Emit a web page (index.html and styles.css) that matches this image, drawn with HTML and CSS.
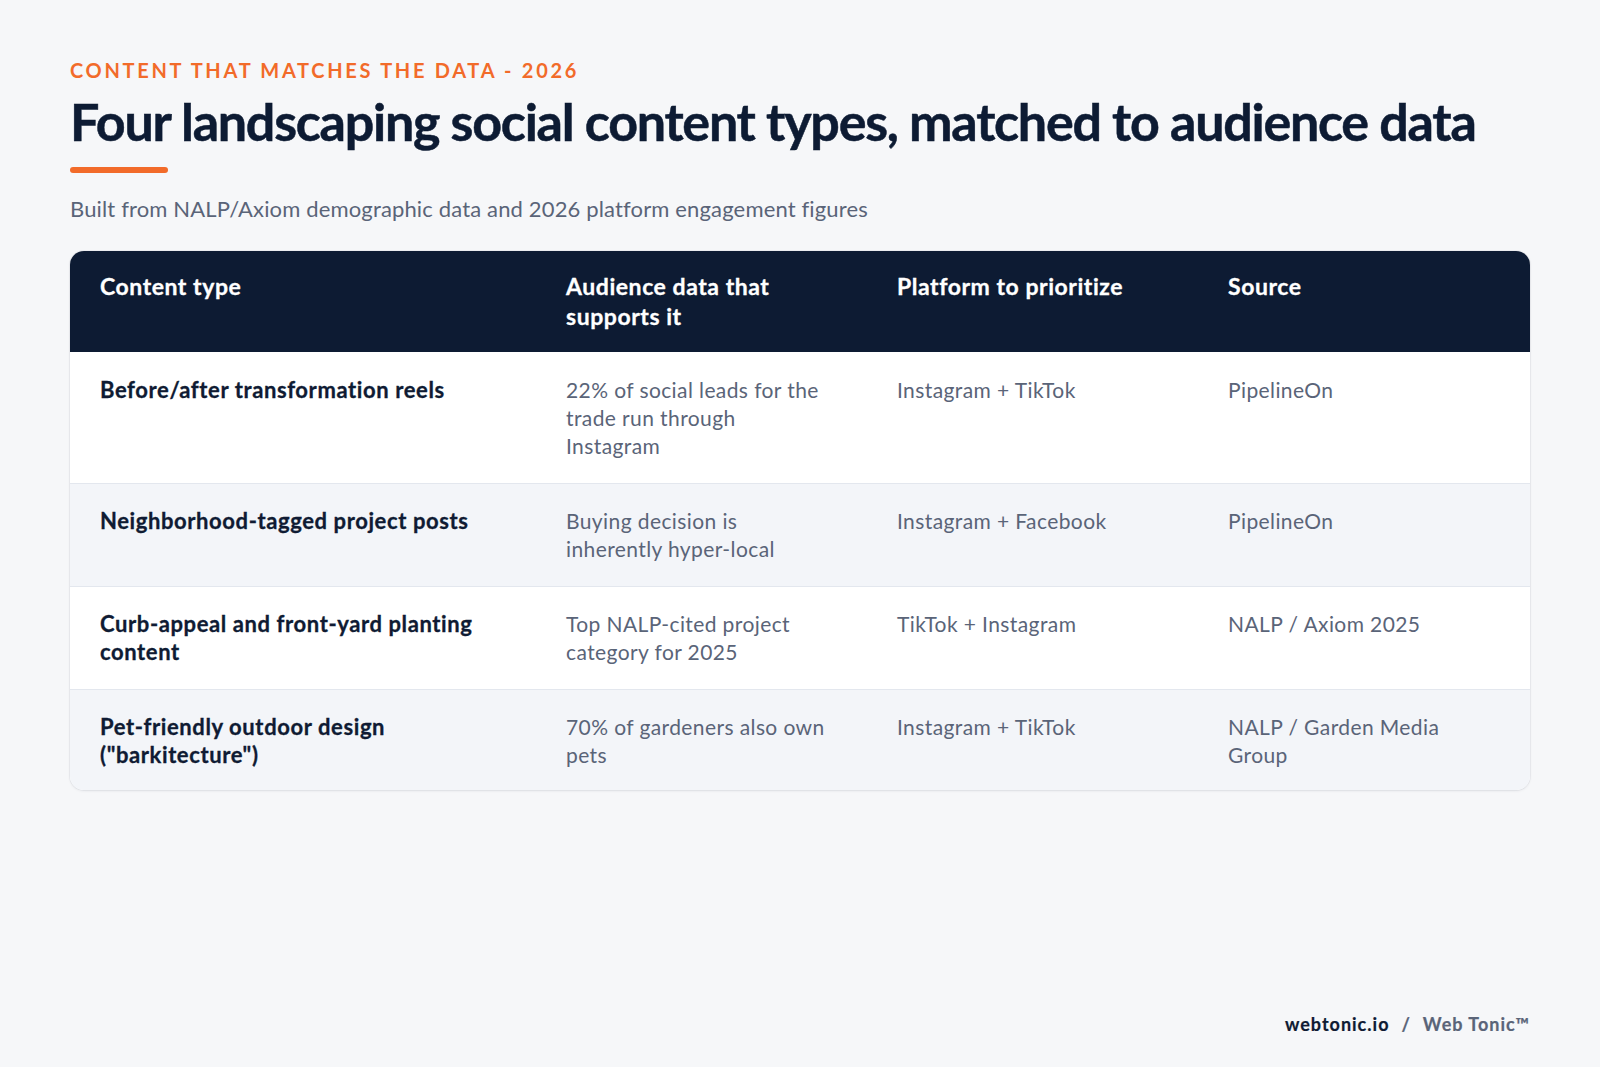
FILE: index.html
```html
<!DOCTYPE html>
<html lang="en">
<head>
<meta charset="utf-8">
<title>Four landscaping social content types</title>
<link rel="stylesheet" href="styles.css">
</head>
<body>
<main class="page">
  <header class="intro">
    <div class="eyebrow">CONTENT THAT MATCHES THE DATA - 2026</div>
    <h1 class="title">Four landscaping social content types, matched to audience data</h1>
    <div class="accent"></div>
    <p class="subtitle">Built from NALP/Axiom demographic data and 2026 platform engagement figures</p>
  </header>
  <div class="card">
    <table class="data">
      <colgroup>
        <col class="c1"><col class="c2"><col class="c3"><col class="c4">
      </colgroup>
      <thead>
        <tr>
          <th>Content type</th>
          <th>Audience data that supports it</th>
          <th>Platform to prioritize</th>
          <th>Source</th>
        </tr>
      </thead>
      <tbody>
        <tr>
          <td class="strong">Before/after transformation reels</td>
          <td>22% of social leads for the trade run through Instagram</td>
          <td>Instagram + TikTok</td>
          <td>PipelineOn</td>
        </tr>
        <tr>
          <td class="strong">Neighborhood-tagged project posts</td>
          <td>Buying decision is inherently hyper-local</td>
          <td>Instagram + Facebook</td>
          <td>PipelineOn</td>
        </tr>
        <tr>
          <td class="strong">Curb-appeal and front-yard planting content</td>
          <td>Top NALP-cited project category for 2025</td>
          <td>TikTok + Instagram</td>
          <td>NALP / Axiom 2025</td>
        </tr>
        <tr>
          <td class="strong">Pet-friendly outdoor design ("barkitecture")</td>
          <td>70% of gardeners also own pets</td>
          <td>Instagram + TikTok</td>
          <td>NALP / Garden Media Group</td>
        </tr>
      </tbody>
    </table>
  </div>
  <footer class="footer">
    <span class="brand">webtonic.io</span><span class="sep">/</span><span class="owner">Web Tonic™</span>
  </footer>
</main>
</body>
</html>
```

FILE: styles.css
```css
* { box-sizing: border-box; }
html, body { margin: 0; padding: 0; }
body {
  background: #f6f7f9;
  font-family: Lato, "Open Sans", sans-serif;
  color: #0f1b33;
}
.page {
  width: 1600px;
  height: 1067px;
  padding: 58px 70px 0 70px;
  display: flex;
  flex-direction: column;
}
.eyebrow {
  color: #f26b2a;
  font-size: 20px;
  font-weight: 700;
  letter-spacing: 2.7px;
  line-height: 24px;
}
.title {
  margin: 9px 0 0 0;
  font-size: 52px;
  line-height: 60px;
  font-weight: 700;
  letter-spacing: -1.25px;
  color: #0d1b33;
  -webkit-text-stroke: 0.5px #0d1b33;
}
.accent {
  width: 98px;
  height: 6px;
  border-radius: 3px;
  background: #f26b2a;
  margin-top: 16px;
}
.subtitle {
  margin: 21px 0 0 0;
  font-size: 22px;
  line-height: 30px;
  letter-spacing: 0.15px;
  color: #5a6478;
}
.card {
  margin-top: 27px;
  background: #ffffff;
  border-radius: 14px;
  overflow: hidden;
  box-shadow: 0 1px 3px rgba(15, 27, 51, 0.08), 0 0 0 1px rgba(15, 27, 51, 0.04);
}
.data {
  width: 100%;
  border-collapse: collapse;
  table-layout: fixed;
}
.c1 { width: 466px; }
.c2 { width: 331px; }
.c3 { width: 331px; }
.data th {
  background: #0d1b33;
  color: #ffffff;
  text-align: left;
  vertical-align: top;
  font-size: 23px;
  font-weight: 700;
  letter-spacing: 0.55px;
  line-height: 29.5px;
  padding: 21px 34px 21px 30px;
  height: 101px;
  -webkit-text-stroke: 0.3px #ffffff;
}
.data td {
  vertical-align: top;
  text-align: left;
  font-size: 21px;
  line-height: 28px;
  letter-spacing: 0.4px;
  color: #5a6478;
  padding: 23px 34px 23px 30px;
}
.data tbody tr:first-child td { padding-top: 24px; }
.data tbody tr:last-child td { padding-bottom: 21px; }
.data td.strong {
  color: #0f1b33;
  font-size: 22px;
  font-weight: 700;
  letter-spacing: 0.6px;
  -webkit-text-stroke: 0.3px #0f1b33;
}
.data tbody tr { border-top: 1px solid #e3e7ee; }
.data tbody tr:first-child { border-top: none; }
.data tbody tr:nth-child(even) td { background: #f3f5f9; }
.footer {
  margin-top: auto;
  margin-bottom: 32px;
  align-self: flex-end;
  font-size: 18px;
  font-weight: 700;
  letter-spacing: 1px;
  line-height: 22px;
  -webkit-text-stroke: 0.2px currentColor;
}
.brand { color: #0f1b33; }
.sep { color: #5a6478; margin: 0 12px; }
.owner { color: #5a6478; }
```
